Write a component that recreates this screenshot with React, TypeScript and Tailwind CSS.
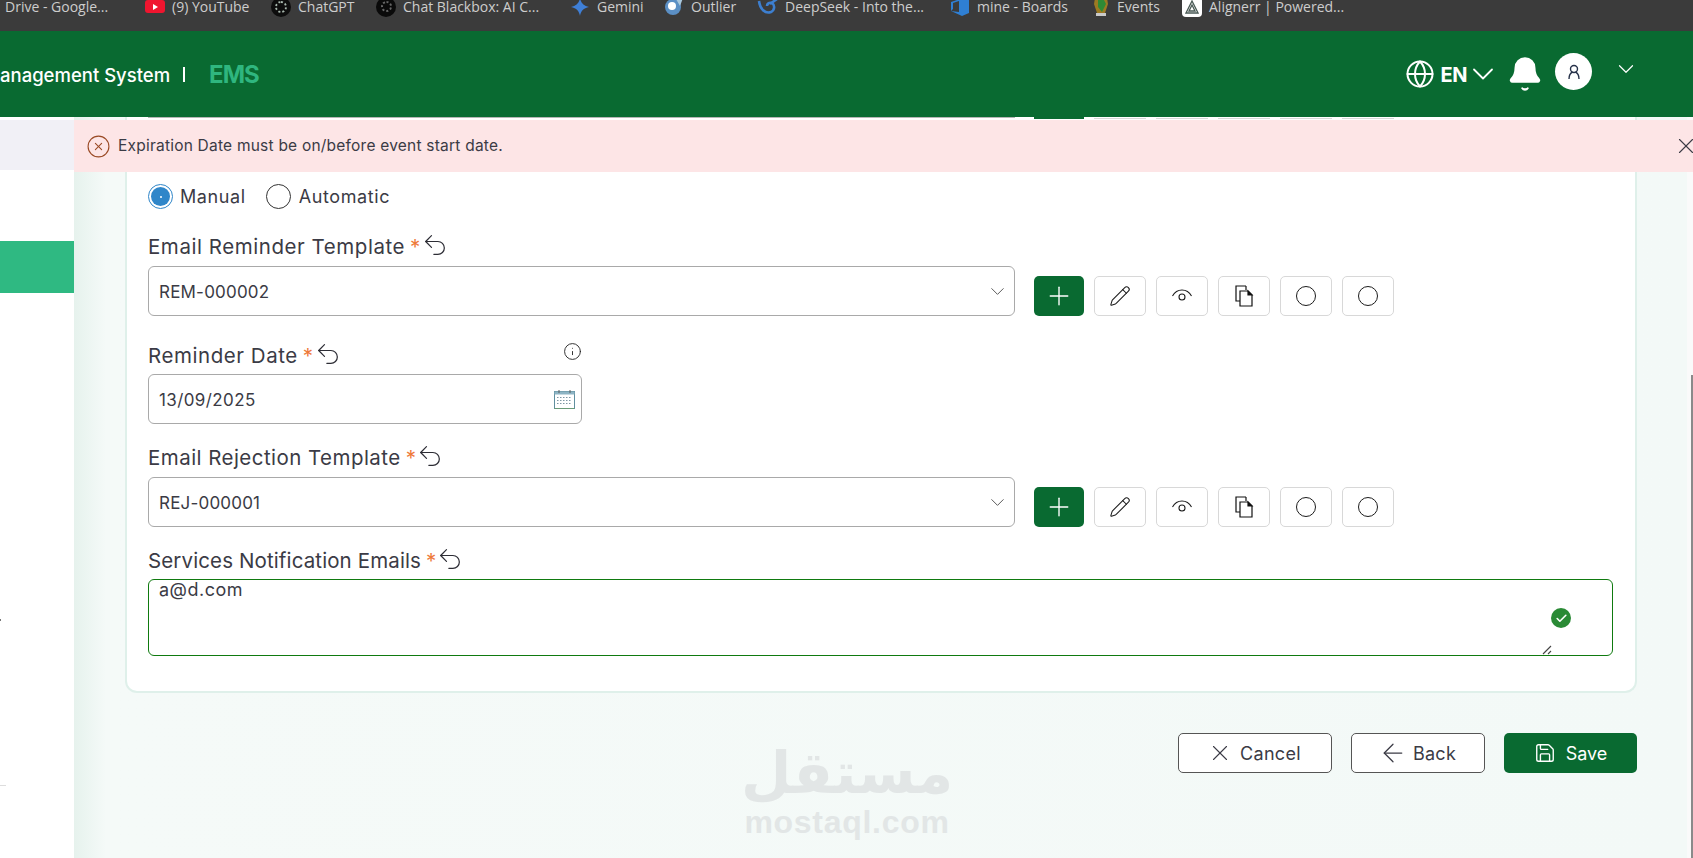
import { Undo2, Pencil, Plus, X, ArrowLeft, Save, ChevronDown, Globe, Bell, Info, CircleX, Check } from 'lucide-react';

function Favicon({ kind }: { kind: string }) {
  if (kind === 'youtube') {
    return <div className="w-5 h-[13px] rounded-[3px] bg-[#f0152f] flex items-center justify-center"><div className="w-0 h-0 border-y-[3px] border-y-transparent border-l-[5px] border-l-white" /></div>;
  }
  if (kind === 'chatgpt') {
    return <div className="w-5 h-5 rounded-full bg-[#0d0d0d] flex items-center justify-center"><div className="w-3 h-3 rounded-full border-2 border-dotted border-[#a9b8ae]" /></div>;
  }
  if (kind === 'blackbox') {
    return <div className="w-5 h-5 rounded-full bg-[#0a0a0a] flex items-center justify-center"><div className="w-[11px] h-[11px] rounded-full border-2 border-dotted border-[#666]" /></div>;
  }
  if (kind === 'gemini') {
    return <svg width="20" height="20" viewBox="0 0 20 20"><path d="M10 1c.8 5 3.5 8 9 9-5.500 1-8.200 4-9 9-.8-5-3.500-8-9-9 5.500-1 8.200-4 9-9z" fill="#3f7fd6" /></svg>;
  }
  if (kind === 'outlier') {
    return <svg width="20" height="20" viewBox="0 0 20 20"><circle cx="9" cy="10" r="8" fill="#5b8fc4" /><path d="M12 2l7-1-3 8z" fill="#a9c7dc" /><circle cx="8" cy="9" r="4" fill="#fff" /></svg>;
  }
  if (kind === 'deepseek') {
    return <svg width="21" height="20" viewBox="0 0 21 20" fill="none" stroke="#3d7fd0" strokeWidth="2.600"><path d="M2 4c1 8 6 13 12 11 4-2 4-7 1-9-3-1-5 1-5 3" /><path d="M13 7l7-5" /></svg>;
  }
  if (kind === 'mine') {
    return <svg width="20" height="20" viewBox="0 0 20 20"><path d="M13 1l6 2v13l-7 3-11-5 8 1V4L3 6v6l-2 2V5z" fill="#2f7fd3" /></svg>;
  }
  if (kind === 'events') {
    return <svg width="18" height="20" viewBox="0 0 18 20"><path d="M3 1h12l1 6-3 9H5L2 7z" fill="#9c7a22" /><path d="M6 3h6l2 4-4 8-4-5z" fill="#2f8a35" /><rect x="4" y="16" width="10" height="3" fill="#c9c9c9" /></svg>;
  }
  return <div className="w-5 h-5 rounded-[4px] bg-white flex items-center justify-center"><svg width="14" height="14" viewBox="0 0 14 14" fill="none" stroke="#4a5a55" strokeWidth="1.300"><path d="M7 1L1 13h12zM7 5l-3 6h6z" /></svg></div>;
}

const bookmarks = [
  { kind: 'youtube', label: '(9) YouTube', w: 'w-[126px]' },
  { kind: 'chatgpt', label: 'ChatGPT', w: 'w-[105px]' },
  { kind: 'blackbox', label: 'Chat Blackbox: AI C...', w: 'w-[194px]' },
  { kind: 'gemini', label: 'Gemini', w: 'w-[94px]' },
  { kind: 'outlier', label: 'Outlier', w: 'w-[93px]' },
  { kind: 'deepseek', label: 'DeepSeek - Into the...', w: 'w-[193px]' },
  { kind: 'mine', label: 'mine - Boards', w: 'w-[142px]' },
  { kind: 'events', label: 'Events', w: 'w-[90px]' },
  { kind: 'alignerr', label: 'Alignerr | Powered...', w: 'w-[170px]' },
];

function BookmarksBar() {
  return (
    <div className="h-[31px] shrink-0 bg-[#3b3b3b] overflow-hidden font-['Open_Sans',sans-serif] text-[14px] text-[#cdcdcd]">
      <div className="flex items-center h-[13px] pl-[5px] whitespace-nowrap">
        <span className="w-[140px] shrink-0">Drive - Google...</span>
        {bookmarks.map((b) => (
          <div key={b.label} className={`${b.w} shrink-0 flex items-center gap-[7px]`}>
            <Favicon kind={b.kind} />
            <span>{b.label}</span>
          </div>
        ))}
      </div>
    </div>
  );
}

function TopHeader() {
  return (
    <div className="h-[86px] shrink-0 bg-[#096a31] flex items-center text-white">
      <span className="mt-[3px] text-[18.500px] font-medium leading-none">anagement System</span>
      <div className="w-[2px] h-[15px] bg-white ml-[13px]" />
      <span className="ml-[24px] mt-[1px] text-[24px] font-bold text-[#2fb67f] leading-none tracking-[-1px]">EMS</span>
      <div className="flex-1" />
      <Globe size={30} strokeWidth={1.600} />
      <span className="ml-[6px] mt-[1px] text-[20px] font-bold leading-none tracking-[-0.5px]">EN</span>
      <ChevronDown size={36} strokeWidth={1.200} className="-ml-[2px]" />
      <Bell size={38} fill="white" strokeWidth={1.200} className="ml-[5px]" />
      <div className="ml-[11px] w-[37px] h-[37px] rounded-full bg-white flex items-center justify-center self-start mt-[22px]">
        <svg width="14" height="16" viewBox="0 0 14 16" fill="none" stroke="#27324a" strokeWidth="1.400"><circle cx="7" cy="5" r="3.500" /><path d="M2 15c0-4 1.500-6 3.500-7M12 15c0-4-1.500-6-3.500-7" /></svg>
      </div>
      <ChevronDown size={26} strokeWidth={1.100} className="ml-[21px] mr-[54px] self-start mt-[25px]" />
    </div>
  );
}

function Sidebar() {
  return (
    <div className="w-[74px] shrink-0 bg-white flex flex-col">
      <div className="mt-[3px] h-[50px] bg-[#f1f0f6]" />
      <div className="mt-[71px] h-[52px] bg-[#2fb982]" />
      <div className="mt-[326px] w-[1px] h-[2px] bg-[#777]" />
      <div className="mt-[164px] w-[6px] h-[1px] bg-[#ddd]" />
    </div>
  );
}

function FieldLabel({ text, spacing }: { text: string; spacing: string }) {
  return (
    <div className={`${spacing} h-[28px] flex items-center text-[20.500px] text-[#3b3b45] leading-none whitespace-nowrap`}>
      <span>{text}</span>
      <span className="ml-[5px] text-[#ee7a3a]">*</span>
      <Undo2 size={28} strokeWidth={1.050} className="-mt-[5px] text-[#2d2d35]" />
    </div>
  );
}

function EyeIcon() {
  return (
    <svg width="22" height="16" viewBox="0 0 22 16" fill="none" stroke="#1c1c1c" strokeWidth="1.100">
      <path d="M1.500 8C4 3.500 7.500 2 11 2s7 1.500 9.500 6" />
      <circle cx="11" cy="9" r="3" />
    </svg>
  );
}

function FilesIcon() {
  return (
    <svg width="20" height="22" viewBox="0 0 20 22" fill="none" stroke="#111" strokeWidth="1.200">
      <path d="M12 1H2v15h4" />
      <path d="M12 1v4" />
      <path d="M6 6h8l4 4v11H6z" />
      <path d="M14 6v4h4z" fill="#111" />
    </svg>
  );
}

function ActionButtons() {
  const box = 'w-[52px] h-10 rounded-[5px] bg-white border border-[#d8d8d8] flex items-center justify-center';
  return (
    <div className="flex gap-[10px] ml-[19px]">
      <div className="w-[50px] h-10 rounded-[5px] bg-[#096a31] flex items-center justify-center">
        <Plus size={30} strokeWidth={1.100} className="text-white" />
      </div>
      <div className={box}><Pencil size={22} strokeWidth={1.150} className="text-[#1c1c1c]" /></div>
      <div className={box}><EyeIcon /></div>
      <div className={box}><FilesIcon /></div>
      <div className={box}><div className="w-[20px] h-[20px] rounded-full border-[1.500px] border-[#1c1c1c]" /></div>
      <div className={box}><div className="w-[20px] h-[20px] rounded-full border-[1.500px] border-[#1c1c1c]" /></div>
    </div>
  );
}

function SelectRow({ value }: { value: string }) {
  return (
    <div className="flex items-end">
      <div className="w-[867px] h-[50px] rounded-[6px] border border-[#a9a9a9] bg-white flex items-center justify-between pl-[10px] pr-[5px] text-[17px] tracking-[0.2px] text-[#3b3b45]">
        <span className="mt-[3px]">{value}</span>
        <ChevronDown size={23} strokeWidth={1} className="text-[#555]" />
      </div>
      <ActionButtons />
    </div>
  );
}

function ClippedRow() {
  return (
    <div className="h-[2px] flex items-start overflow-hidden">
      <div className="w-[867px] h-[1px] bg-[#b5b5b5]" />
      <div className="ml-[19px] w-[50px] h-[2px] bg-[#096a31]" />
      {[0, 1, 2, 3, 4].map((i) => (
        <div key={i} className="ml-[10px] w-[52px] h-[2px] border-b border-[#d8d8d8]" />
      ))}
    </div>
  );
}

function FormCard() {
  return (
    <div className="border-x-2 border-b-2 border-[#dff0ea] rounded-b-[12px] bg-white pl-[21px] pr-[22px] pb-[35px]">
      <ClippedRow />
      <div className="mt-[65px] flex items-center h-[25px] text-[18px] tracking-[0.6px] text-[#3b3b45]">
        <div className="w-[25px] h-[25px] rounded-full border border-[#2f86c9] flex items-center justify-center">
          <div className="w-[19px] h-[19px] rounded-full bg-[#2f86c9] flex items-center justify-center">
            <div className="w-[2px] h-[2px] rounded-full bg-white" />
          </div>
        </div>
        <span className="ml-[7px]">Manual</span>
        <div className="ml-[20px] w-[25px] h-[25px] rounded-full border border-[#333]" />
        <span className="ml-[8px]">Automatic</span>
      </div>

      <div className="mt-[24px] mb-[5px]"><FieldLabel text="Email Reminder Template" spacing="tracking-[0.55px]" /></div>
      <SelectRow value="REM-000002" />

      <div className="mt-[26px] mb-[4px] w-[434px] flex justify-between items-start">
        <FieldLabel text="Reminder Date" spacing="tracking-[0.55px]" />
        <Info size={19} strokeWidth={1.150} className="text-[#222]" />
      </div>
      <div className="w-[434px] h-[50px] rounded-[6px] border border-[#a9a9a9] flex items-center justify-between pl-[10px] pr-[6px] text-[17px] tracking-[0.4px] text-[#3b3b45]">
        <span className="mt-[3px]">13/09/2025</span>
        <svg width="21" height="20" viewBox="0 0 21 20" fill="none">
          <rect x="0.500" y="2.500" width="20" height="17" fill="#fff" stroke="#5f8f9f" />
          <rect x="0.500" y="2.500" width="20" height="3" fill="#8db4c4" />
          <path d="M5 1v3M16 1v3" stroke="#5a5a5a" />
          <path d="M3 8.500h15M3 11.500h15M3 14.500h15" stroke="#7f97a5" strokeDasharray="1.500 1.500" />
          <path d="M0.500 19.500h20" stroke="#6b9a78" />
        </svg>
      </div>

      <div className="mt-[20px] mb-[5px]"><FieldLabel text="Email Rejection Template" spacing="tracking-[0.45px]" /></div>
      <SelectRow value="REJ-000001" />

      <div className="mt-[20px] mb-[4px]"><FieldLabel text="Services Notification Emails" spacing="tracking-[0.12px]" /></div>
      <div className="relative h-[77px] rounded-[6px] border-[1.500px] border-[#0f7a0f] pl-[10px] text-[18px] tracking-[0.5px] leading-[20px] text-[#3b3b45]">
        a@d.com
        <div className="absolute right-[41px] top-[28px] w-5 h-5 rounded-full bg-[#2a8a35] flex items-center justify-center">
          <Check size={13} strokeWidth={3} className="text-white" />
        </div>
        <svg className="absolute right-[60px] bottom-0" width="10" height="10" viewBox="0 0 10 10" stroke="#444" strokeWidth="1.100">
          <path d="M1 9l8-8M6 9l3-3" />
        </svg>
      </div>
    </div>
  );
}

function FooterButtons() {
  const outline = 'h-10 rounded-[5px] border border-[#555] bg-white flex items-center justify-center text-[18px] tracking-[0.3px] text-[#3b3b45]';
  return (
    <div className="mt-[40px] flex justify-end gap-[19px]">
      <div className={`${outline} w-[154px] gap-[7px] pr-[2px]`}>
        <X size={26} strokeWidth={1} />
        <span>Cancel</span>
      </div>
      <div className={`${outline} w-[134px] gap-[5px] pr-[2px]`}>
        <ArrowLeft size={30} strokeWidth={1} />
        <span>Back</span>
      </div>
      <div className="w-[133px] h-10 rounded-[5px] bg-[#096a31] flex items-center justify-center gap-[10px] text-[18px] text-white">
        <Save size={22} strokeWidth={1.500} />
        <span>Save</span>
      </div>
    </div>
  );
}

export default function App() {
  return (
    <div className="w-[1693px] h-[858px] overflow-hidden flex flex-col bg-white font-['Inter',sans-serif]">
      <BookmarksBar />
      <TopHeader />
      <div className="relative flex-1 flex min-h-0">
        <Sidebar />
        <div className="flex-1 min-w-0 pl-[51px] pr-[50px] bg-[linear-gradient(90deg,#e6f2ed_0,#f5faf8_32px,#f3f9f7_100%)]">
          <FormCard />
          <FooterButtons />
        </div>
        <div className="w-[6px] shrink-0 bg-[#fafafa] flex justify-end">
          <div className="mt-[258px] w-[2px] bg-[#8a8a8a]" />
        </div>

        {/* alert sits over the scrolled form */}
        <div className="absolute top-[3px] left-[74px] right-0 h-[52px] bg-[#fde5e6] flex items-center overflow-hidden pl-[12px] text-[15.500px] tracking-[0.22px] text-[#3b3b45]">
          <CircleX size={25} strokeWidth={1.050} className="text-[#9a4a25]" />
          <span className="ml-[7px] flex-1">Expiration Date must be on/before event start date.</span>
          <X size={26} strokeWidth={1} className="-mr-[6px] shrink-0" />
        </div>

        {/* site watermark */}
        <div className="absolute left-[745px] top-[622px] w-[204px] flex flex-col items-center text-[#e2e6e6] pointer-events-none">
          <span className="font-['DejaVu_Sans',sans-serif] font-bold text-[58px] leading-[68px]">مستقل</span>
          <span className="font-['Liberation_Sans',sans-serif] font-bold text-[32px] leading-[30px] tracking-[0.7px]">mostaql.com</span>
        </div>
      </div>
    </div>
  );
}
